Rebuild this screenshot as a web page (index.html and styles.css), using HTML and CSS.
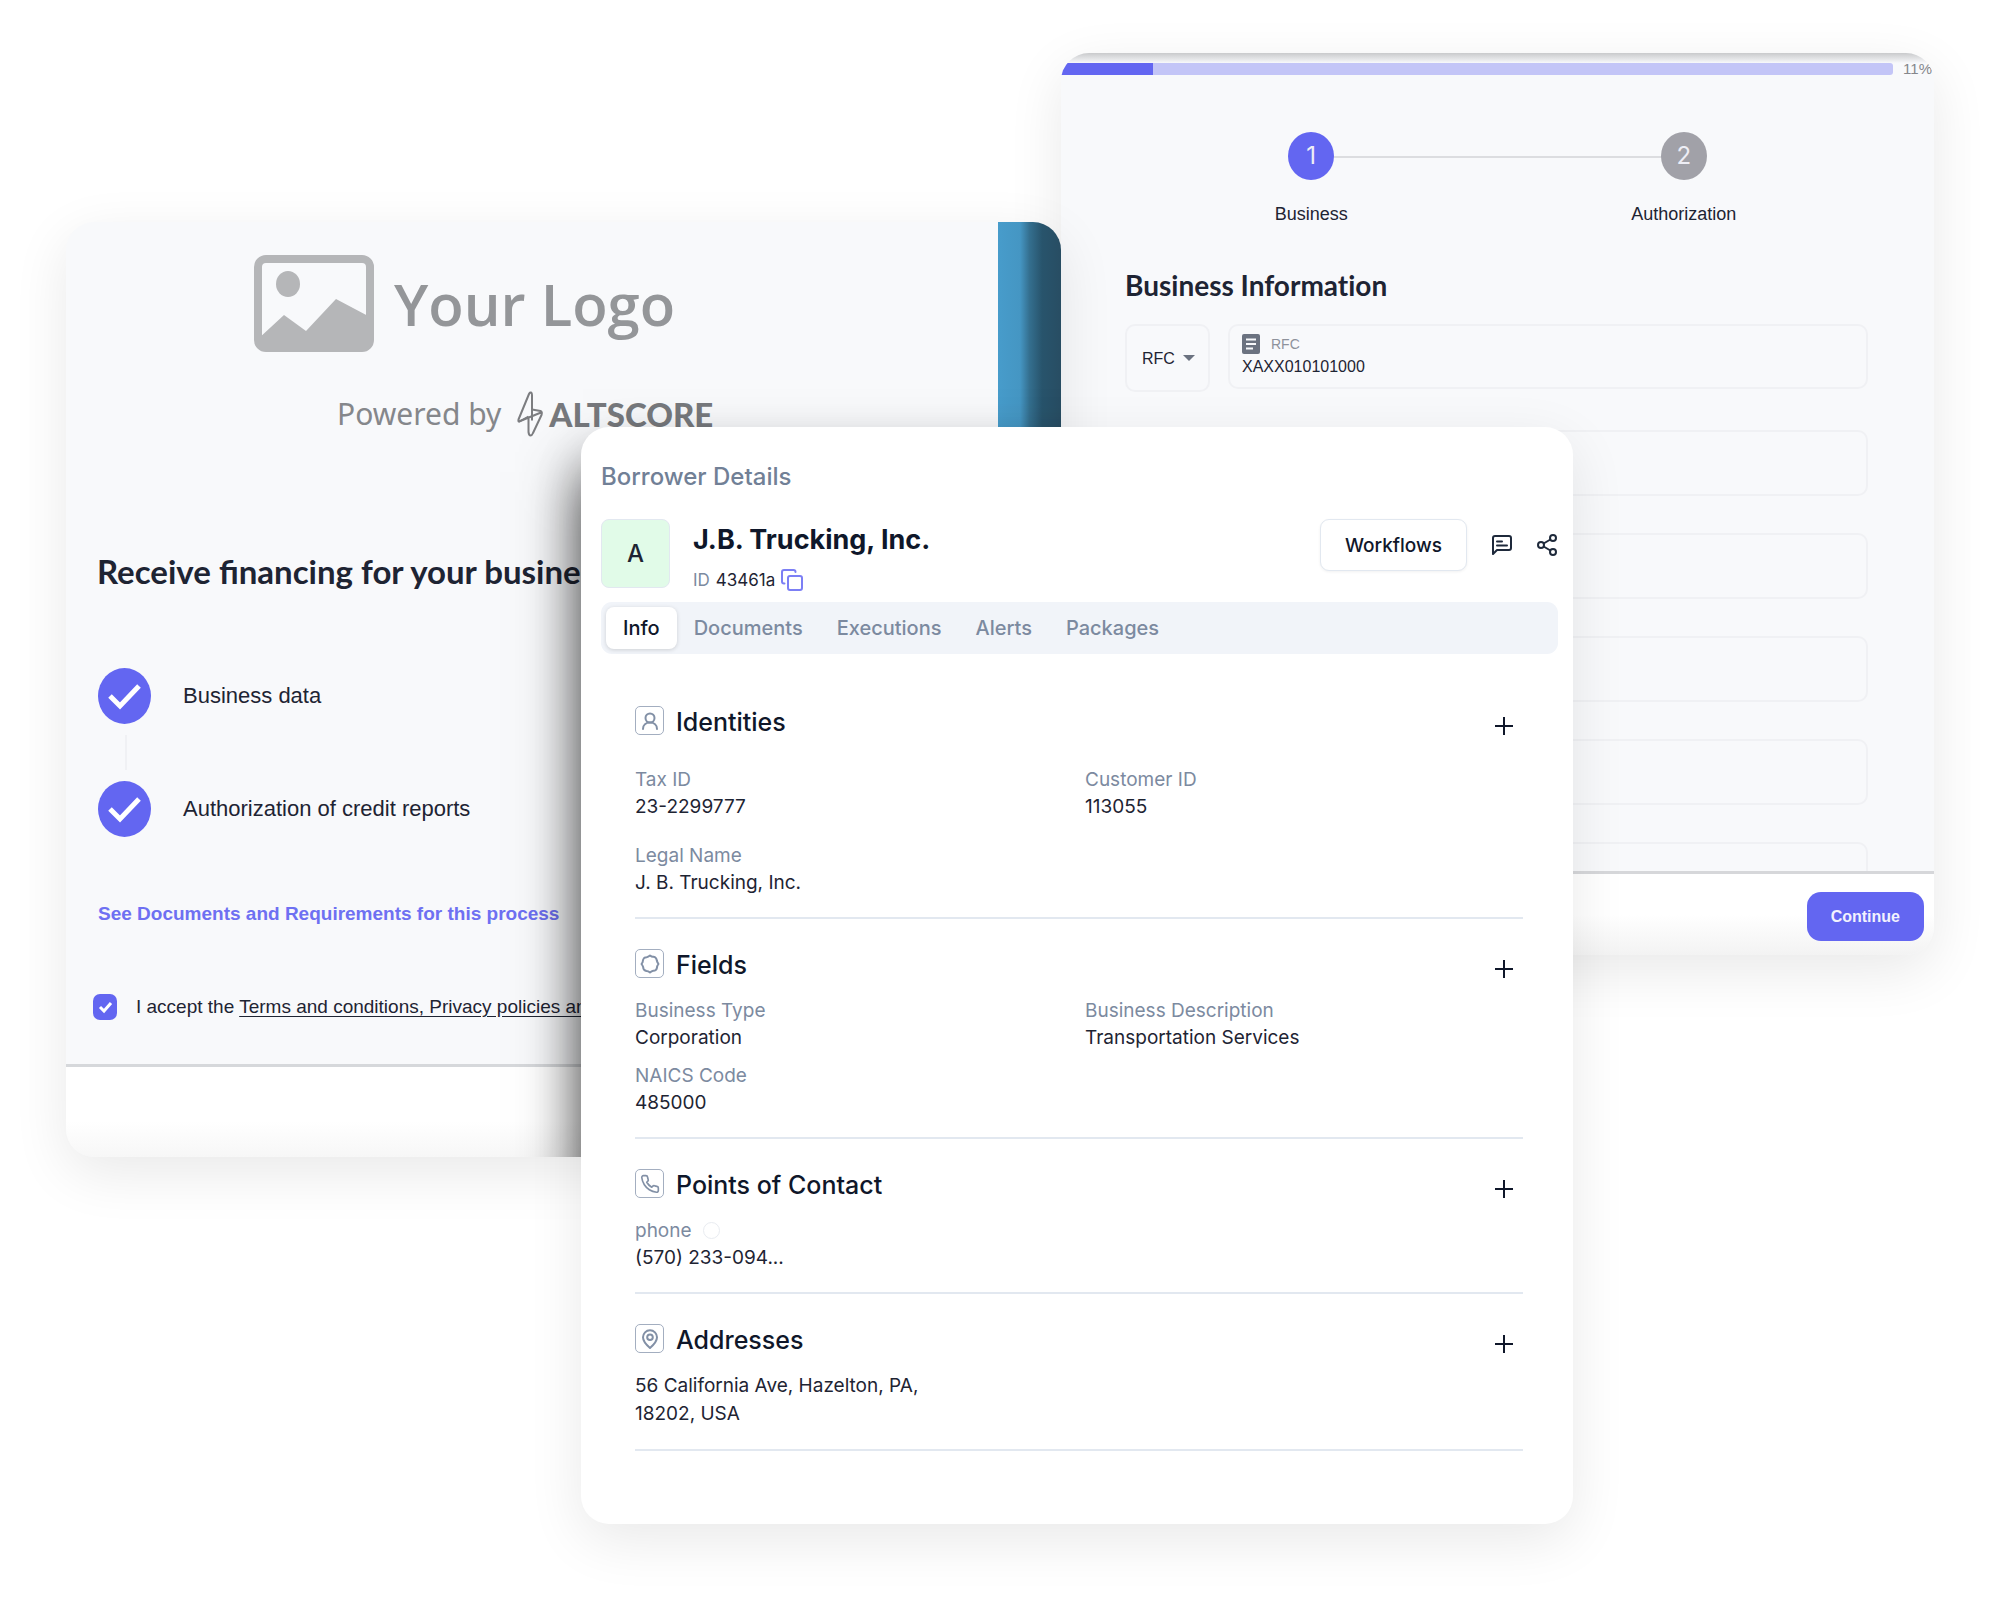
FILE: index.html
```html
<!DOCTYPE html>
<html lang="en">
<head>
    <meta charset="UTF-8" />
    <meta name="viewport" content="width=device-width, initial-scale=1" />
    <title>Borrower Details</title>
    <link rel="stylesheet" href="styles.css">
</head>
<body>
    <main class="stage">

        <!-- Business form -->
        <section class="card business">
            <div class="business-body">
                <div class="progress">
                    <div class="progress-track"><div class="progress-fill" style="width: 11%"></div></div>
                    <span class="progress-value">11%</span>
                </div>
                <ol class="steps">
                    <li class="step active"><span class="step-number">1</span>Business</li>
                    <li class="step"><span class="step-number">2</span>Authorization</li>
                </ol>
                <form class="business-form">
                    <h2>Business Information</h2>
                    <div class="field-row">
                        <div class="select-box">
                            <select aria-label="Identifier type"><option>RFC</option></select>
                            <svg width="12" height="6" viewBox="0 0 12 6"><path d="M0 0h12L6 6z" fill="#6b7280"/></svg>
                        </div>
                        <div class="field">
                            <label for="rfc">
                                <svg width="18" height="20" viewBox="0 0 18 20"><rect width="18" height="20" rx="2" fill="#6b7280"/><path d="M4 5.500h10M4 10h10M4 14.500h7" stroke="#f8f9fc" stroke-width="2"/></svg>
                                RFC
                            </label>
                            <input type="text" id="rfc" value="XAXX010101000" />
                        </div>
                    </div>
                    <input class="blank" type="text" aria-label="Business name" />
                    <input class="blank" type="text" aria-label="Street" />
                    <input class="blank" type="text" aria-label="City" />
                    <input class="blank" type="text" aria-label="State" />
                    <input class="blank" type="text" aria-label="Zip code" />
                </form>
            </div>
            <div class="business-footer">
                <button type="button" class="continue">Continue</button>
            </div>
        </section>

        <!-- Financing request -->
        <section class="card financing">
            <div class="financing-main">
                <div class="financing-body">
                    <div class="logo">
                        <svg width="120" height="97" viewBox="0 0 120 97">
                            <rect x="4" y="4" width="112" height="89" rx="8" fill="none" stroke="#b5b6b8" stroke-width="8"/>
                            <ellipse cx="34" cy="29" rx="12" ry="13" fill="#b5b6b8"/>
                            <path d="M4 84L30 60 52 76 82 44 116 62V93H4z" fill="#b5b6b8"/>
                        </svg>
                        <span>Your Logo</span>
                    </div>
                    <div class="powered">
                        <span>Powered by</span>
                        <svg width="26" height="46" viewBox="0 0 26 46" fill="none" stroke="#7c7d80" stroke-width="2" stroke-linejoin="round">
                            <path d="M11.500 25.500L2.500 30.500Q1 31 1.500 28.500L12 3Q13 1 14 1.500 15 2 15 4V29.500"/>
                            <path d="M2 30.500L24 21.500M11.500 25.500V41Q12 44.500 13.500 44.500 15 44.500 16 42L24.500 24Q25.500 20.500 23.500 20L15 18.500"/>
                        </svg>
                        <strong>ALTSCORE</strong>
                    </div>
                    <h1>Receive financing for your business</h1>
                    <ul class="checks">
                        <li>
                            <svg width="53" height="56" viewBox="0 0 53 56"><ellipse cx="26.500" cy="28" rx="26.500" ry="28" fill="#6366f1"/><path d="M12 28l10 10 19-20" fill="none" stroke="#fff" stroke-width="5"/></svg>
                            Business data
                        </li>
                        <li>
                            <svg width="53" height="56" viewBox="0 0 53 56"><ellipse cx="26.500" cy="28" rx="26.500" ry="28" fill="#6366f1"/><path d="M12 28l10 10 19-20" fill="none" stroke="#fff" stroke-width="5"/></svg>
                            Authorization of credit reports
                        </li>
                    </ul>
                    <a class="requirements" href="#">See Documents and Requirements for this process</a>
                    <div class="accept">
                        <input type="checkbox" id="accept" checked />
                        <label for="accept">I accept the <a href="#">Terms and conditions, Privacy policies and</a></label>
                    </div>
                </div>
                <div class="financing-strip"></div>
            </div>
            <div class="financing-footer"></div>
        </section>

        <!-- Borrower details -->
        <section class="card borrower">
            <p class="borrower-label">Borrower Details</p>
            <header class="borrower-header">
                <div class="avatar">A</div>
                <div class="borrower-name">
                    <h2>J.B. Trucking, Inc.</h2>
                    <p>
                        <span class="muted">ID</span> 43461a
                        <button type="button" class="icon-button" aria-label="Copy ID">
                            <svg width="22" height="22" viewBox="0 0 22 22" fill="none" stroke="#7c7ff5" stroke-width="2" stroke-linejoin="round" stroke-linecap="round"><rect x="7" y="7" width="14" height="14" rx="2"/><path d="M3.500 14.500H3a2 2 0 0 1-2-2V3a2 2 0 0 1 2-2h9.500a2 2 0 0 1 2 2"/></svg>
                        </button>
                    </p>
                </div>
                <div class="actions">
                    <button type="button" class="workflows">Workflows</button>
                    <button type="button" class="icon-button" aria-label="Comments">
                        <svg width="20" height="20" viewBox="0 0 20 20" fill="none" stroke="#1e293b" stroke-width="2" stroke-linejoin="round" stroke-linecap="round"><path d="M1 19V3a2 2 0 0 1 2-2h14a2 2 0 0 1 2 2v10a2 2 0 0 1-2 2H5z"/><path d="M5 6.500h5M5 10.500h10"/></svg>
                    </button>
                    <button type="button" class="icon-button" aria-label="Share">
                        <svg width="20" height="22" viewBox="0 0 20 22" fill="none" stroke="#1e293b" stroke-width="2"><circle cx="4" cy="11" r="3"/><circle cx="16" cy="4" r="3"/><circle cx="16" cy="18" r="3"/><path d="M6.600 9.500l6.800-4M6.600 12.500l6.800 4"/></svg>
                    </button>
                </div>
            </header>

            <nav class="tabs">
                <button type="button" class="tab active">Info</button>
                <button type="button" class="tab">Documents</button>
                <button type="button" class="tab">Executions</button>
                <button type="button" class="tab">Alerts</button>
                <button type="button" class="tab">Packages</button>
            </nav>

            <div class="sections">
                <section class="section roomy">
                    <div class="section-head">
                        <span class="section-icon"><svg width="16" height="18" viewBox="0 0 16 18"><circle cx="8" cy="6" r="4.500"/><path d="M1 17c0-4 3-6.500 7-6.500s7 2.500 7 6.500"/></svg></span>
                        <h3>Identities</h3>
                        <button type="button" class="icon-button add" aria-label="Add identity"><svg width="20" height="20" viewBox="0 0 20 20"><path d="M10 1v18M1 10h18"/></svg></button>
                    </div>
                    <dl class="items">
                        <div><dt>Tax ID</dt><dd>23-2299777</dd></div>
                        <div><dt>Customer ID</dt><dd>113055</dd></div>
                        <div><dt>Legal Name</dt><dd>J. B. Trucking, Inc.</dd></div>
                    </dl>
                </section>

                <section class="section">
                    <div class="section-head">
                        <span class="section-icon"><svg width="20" height="20" viewBox="0 0 20 20"><path d="M10 1.500q2 1.600 3.500 1.300 1.500.3 2.400 1.300.9 1.100.9 2.500.4 1.700 1.700 3.400-1.600 2-1.500 3.500-.2 1.500-1.200 2.400-1 .9-2.500.9-1.700.4-3.300 1.700-2-1.600-3.500-1.500-1.500-.3-2.400-1.200-.9-1-.9-2.500Q2.900 11.800 1.500 10q1.500-1.900 1.400-3.400.2-1.500 1.200-2.500 1-.9 2.500-.9Q8.200 3 10 1.500z"/></svg></span>
                        <h3>Fields</h3>
                        <button type="button" class="icon-button add" aria-label="Add field"><svg width="20" height="20" viewBox="0 0 20 20"><path d="M10 1v18M1 10h18"/></svg></button>
                    </div>
                    <dl class="items">
                        <div><dt>Business Type</dt><dd>Corporation</dd></div>
                        <div><dt>Business Description</dt><dd>Transportation Services</dd></div>
                        <div><dt>NAICS Code</dt><dd>485000</dd></div>
                    </dl>
                </section>

                <section class="section">
                    <div class="section-head">
                        <span class="section-icon"><svg width="20" height="20" viewBox="0 0 24 24"><path d="M22 16.920v3a2 2 0 0 1-2.180 2 19.790 19.790 0 0 1-8.630-3.070 19.500 19.500 0 0 1-6-6 19.790 19.790 0 0 1-3.070-8.670A2 2 0 0 1 4.110 2h3a2 2 0 0 1 2 1.720c.127.96.361 1.903.7 2.810a2 2 0 0 1-.45 2.110L8.090 9.910a16 16 0 0 0 6 6l1.270-1.270a2 2 0 0 1 2.110-.45c.907.339 1.850.573 2.810.7A2 2 0 0 1 22 16.920z"/></svg></span>
                        <h3>Points of Contact</h3>
                        <button type="button" class="icon-button add" aria-label="Add contact"><svg width="20" height="20" viewBox="0 0 20 20"><path d="M10 1v18M1 10h18"/></svg></button>
                    </div>
                    <dl class="items">
                        <div><dt>phone <span class="dot"></span></dt><dd>(570) 233-094...</dd></div>
                    </dl>
                </section>

                <section class="section">
                    <div class="section-head">
                        <span class="section-icon"><svg width="20" height="20" viewBox="0 0 20 20"><path d="M17 8.300C17 13 10 19 10 19S3 13 3 8.300a7 7 0 0 1 14 0z"/><circle cx="10" cy="8.300" r="2.800"/></svg></span>
                        <h3>Addresses</h3>
                        <button type="button" class="icon-button add" aria-label="Add address"><svg width="20" height="20" viewBox="0 0 20 20"><path d="M10 1v18M1 10h18"/></svg></button>
                    </div>
                    <address>56 California Ave, Hazelton, PA,<br>18202, USA</address>
                </section>
            </div>
        </section>

    </main>
</body>
</html>
```

FILE: styles.css
```css
:root {
    --primary: #6366f1;
    --panel: #f8f9fb;
    --line: #f0f1f4;
    --muted: #7c8aa0;
    --text: #1e2433;
    --dark: #0f172a;
}

* {
    box-sizing: border-box;
}

body {
    margin: 0;
    background-color: #fff;
    color: var(--text);
    font-family: Inter, "Liberation Sans", sans-serif;
}

h1, h2, h3, p, ul, ol, dl, dd {
    margin: 0;
    padding: 0;
}

ul, ol {
    list-style: none;
}

svg {
    display: block;
    flex: none;
}

button, input, select {
    font-family: inherit;
    color: inherit;
}

/* The three cards share one grid row and overlap */
.stage {
    display: grid;
    grid-template-columns:
        minmax(0, 66fr) minmax(0, 515fr) minmax(0, 480fr)
        minmax(0, 512fr) minmax(0, 361fr) minmax(0, 66fr);
    align-items: start;
    min-height: 100vh;
    padding-bottom: 80px;
}

.card {
    grid-row: 1;
    border-radius: 28px;
    box-shadow: 0 16px 56px rgba(0, 0, 0, 0.09);
    overflow: hidden;
}

/* Business form */
.business {
    grid-column: 4 / 6;
    margin-top: 53px;
    background-color: var(--panel);
    font-family: "Liberation Sans", Arial, sans-serif;
}

.business-body {
    height: 821px;
    overflow: hidden;
    border-bottom: 3px solid #d6d7da;
    background-image: linear-gradient(#c9cacc, #f3f4f6 9px, var(--panel) 10px);
}

.progress {
    display: flex;
    align-items: center;
    gap: 10px;
    height: 13px;
    margin-top: 9px;
}

.progress-track {
    flex: 1;
    height: 12px;
    background-color: #c3c5f7;
    border-radius: 0 3px 3px 0;
}

.progress-fill {
    height: 100%;
    background-color: var(--primary);
}

.progress-value {
    font-size: 15px;
    color: #85878c;
    padding-right: 2px;
}

.steps {
    display: flex;
    padding: 57px 64px 0;
}

.step {
    position: relative;
    flex: 1;
    display: flex;
    flex-direction: column;
    align-items: center;
    gap: 22px;
    font-size: 18px;
    line-height: 24px;
}

.step-number {
    z-index: 1;
    width: 46px;
    height: 48px;
    border-radius: 50%;
    background-color: #a1a1a8;
    color: #eeeef5;
    font-family: Inter, sans-serif;
    font-size: 24px;
    line-height: 48px;
    text-align: center;
}

.step.active .step-number {
    background-color: var(--primary);
}

.step.active::after {
    content: "";
    position: absolute;
    top: 24px;
    left: 50%;
    width: 100%;
    height: 2px;
    background-color: #dcdde0;
}

.business-form {
    display: flex;
    flex-direction: column;
    padding: 41px 66px 0 64px;
}

.business-form h2 {
    font-family: Lato, sans-serif;
    font-size: 28px;
    font-variant-ligatures: none;
    line-height: 36px;
}

.field-row {
    display: flex;
    align-items: flex-start;
    gap: 18px;
    margin: 21px 0 38px;
}

.select-box {
    display: flex;
    align-items: center;
    gap: 8px;
    height: 68px;
    padding: 0 13px 0 15px;
    border: 2px solid var(--line);
    border-radius: 10px;
}

.select-box select {
    appearance: none;
    border: 0;
    padding: 0;
    background: none;
    font-size: 16px;
}

.field {
    flex: 1;
    height: 65px;
    padding: 7px 12px;
    border: 2px solid var(--line);
    border-radius: 10px;
}

.field label {
    display: flex;
    align-items: center;
    gap: 11px;
    font-size: 14px;
    line-height: 22px;
    color: #8e929c;
}

.field input {
    display: block;
    width: 100%;
    height: 24px;
    border: 0;
    padding: 0;
    background: none;
    font-size: 16px;
}

.blank {
    width: 100%;
    height: 66px;
    flex: none;
    margin-bottom: 37px;
    padding: 0 12px;
    border: 2px solid var(--line);
    border-radius: 10px;
    background: none;
}

.business-footer {
    display: flex;
    justify-content: flex-end;
    padding: 18px 10px 14px;
    background-image: linear-gradient(#fff 50%, #f3f3f3);
}

.continue {
    height: 49px;
    padding: 0 24px;
    border: 0;
    border-radius: 14px;
    background-color: var(--primary);
    color: #f2f2fe;
    font-size: 16px;
    font-weight: bold;
}

/* Financing request */
.financing {
    position: relative;
    grid-column: 2 / 4;
    margin-top: 222px;
    background-color: var(--panel);
    font-family: "Liberation Sans", Arial, sans-serif;
}

/* dark shadow behind the borrower card */
.financing::after {
    content: "";
    position: absolute;
    top: 250px;
    bottom: -80px;
    left: 52%;
    width: 60%;
    box-shadow: 0 0 56px rgba(0, 0, 0, 0.8);
}

.financing-main {
    display: flex;
    border-bottom: 3px solid #d6d8db;
}

.financing-body {
    flex: 1;
    min-width: 0;
    padding: 33px 27px 44px;
    white-space: nowrap;
}

.financing-strip {
    width: 63px;
    background-image: linear-gradient(to right, #479ccb, #4596c3 35%, #346f8f 50%, #28546c 70%, #284d63);
}

.logo {
    display: flex;
    align-items: center;
    gap: 20px;
    padding-left: 161px;
    color: #949699;
    font-family: "Open Sans", sans-serif;
    font-size: 58px;
    font-weight: 600;
    line-height: 97px;
}

.powered {
    display: flex;
    align-items: center;
    padding: 39px 0 0 244px;
    color: #85878b;
    font-family: "Noto Sans", sans-serif;
    font-size: 30px;
    line-height: 46px;
}

.powered svg {
    margin: 0 6px 0 16px;
}

.powered strong {
    font-family: Lato, sans-serif;
    font-size: 33px;
    font-weight: 900;
    color: #77797d;
}

.financing h1 {
    margin-top: 112px;
    padding-left: 4px;
    font-family: Lato, sans-serif;
    font-size: 33px;
    line-height: 44px;
}

.checks {
    display: flex;
    flex-direction: column;
    gap: 57px;
    margin: 75px 0 65px;
    padding-left: 5px;
}

.checks li {
    position: relative;
    display: flex;
    align-items: center;
    gap: 32px;
    font-size: 22px;
}

.checks li + li::before {
    content: "";
    position: absolute;
    top: -46px;
    left: 27px;
    width: 2px;
    height: 35px;
    background-color: #f0f1f4;
}

.requirements {
    display: block;
    padding-left: 5px;
    color: #6e70f2;
    font-size: 19px;
    font-weight: bold;
    line-height: 24px;
    text-decoration: none;
}

.accept {
    display: flex;
    align-items: center;
    gap: 19px;
    margin-top: 68px;
    font-size: 19px;
    line-height: 26px;
}

.accept input {
    appearance: none;
    flex: none;
    width: 24px;
    height: 26px;
    margin: 0;
    border-radius: 7px;
    background: var(--primary) url("data:image/svg+xml,%3Csvg xmlns='http://www.w3.org/2000/svg' viewBox='0 0 24 26'%3E%3Cpath d='M7 13l4 4 7-8' fill='none' stroke='white' stroke-width='3'/%3E%3C/svg%3E") center no-repeat;
}

.accept a {
    color: inherit;
    text-underline-offset: 3px;
}

.financing-footer {
    height: 90px;
    background-image: linear-gradient(#fff 60%, #f7f7f7);
}

/* Borrower details */
.borrower {
    z-index: 2;
    grid-column: 3 / 5;
    margin-top: 427px;
    padding: 33px 15px 73px 20px;
    background-color: #fff;
}

.borrower-label {
    color: #718096;
    font-size: 24px;
    font-weight: 500;
    line-height: 34px;
}

.borrower-header {
    display: flex;
    align-items: flex-start;
    margin: 25px 0 9px;
}

.avatar {
    width: 69px;
    height: 69px;
    border: 1px solid #e2e8f0;
    border-radius: 8px;
    background-color: #e1fbe8;
    font-size: 24px;
    font-weight: 500;
    line-height: 67px;
    text-align: center;
}

.borrower-name {
    margin-left: 23px;
}

.borrower-name h2 {
    color: var(--dark);
    font-size: 27px;
    font-weight: 700;
    line-height: 42px;
}

.borrower-name p {
    display: flex;
    align-items: center;
    gap: 6px;
    margin-top: 6px;
    font-size: 17px;
    line-height: 26px;
}

.muted {
    color: var(--muted);
}

.icon-button {
    border: 0;
    padding: 0;
    background: none;
}

.actions {
    display: flex;
    align-items: center;
    gap: 25px;
    margin-left: auto;
    padding-right: 1px;
}

.workflows {
    height: 52px;
    padding: 0 24px;
    border: 1px solid #e2e8f0;
    border-radius: 9px;
    background-color: #fff;
    box-shadow: 0 1px 3px rgba(0, 0, 0, 0.06);
    color: var(--dark);
    font-size: 19px;
    font-weight: 500;
}

.tabs {
    display: flex;
    padding: 5px;
    border-radius: 11px;
    background-color: #f1f4f9;
}

.tab {
    height: 42px;
    padding: 0 17px;
    border: 0;
    border-radius: 8px;
    background: none;
    color: var(--muted);
    font-size: 20px;
    font-weight: 500;
}

.tab.active {
    background-color: #fff;
    box-shadow: 0 1px 4px rgba(0, 0, 0, 0.15);
    color: var(--dark);
}

.sections {
    padding: 22px 35px 0 34px;
}

.section {
    padding: 30px 0 21px;
    border-bottom: 2px solid #e2e8f0;
}

.section-head {
    display: flex;
    align-items: flex-start;
    gap: 12px;
    margin-bottom: 16px;
}

.roomy .section-head {
    margin-bottom: 28px;
}

.section-icon {
    display: flex;
    align-items: center;
    justify-content: center;
    width: 29px;
    height: 29px;
    border: 1px solid #a3aec0;
    border-radius: 5px;
}

.section-icon svg {
    fill: none;
    stroke: #8290a6;
    stroke-width: 2;
    stroke-linejoin: round;
    stroke-linecap: round;
}

.section h3 {
    color: var(--dark);
    font-size: 25px;
    font-weight: 500;
    line-height: 32px;
}

.add {
    margin: 10px 9px 0 auto;
}

.add svg {
    fill: none;
    stroke: var(--dark);
    stroke-width: 2;
}

.items {
    display: grid;
    grid-template-columns: 1fr 1fr;
    gap: 11px 12px;
}

.roomy .items {
    row-gap: 22px;
}

.items dt {
    display: flex;
    align-items: center;
    gap: 11px;
    color: var(--muted);
}

.items,
address {
    font-size: 19px;
    font-style: normal;
    line-height: 27px;
}

address {
    line-height: 28px;
}

.dot {
    width: 17px;
    height: 17px;
    border: 1px solid #e9ecf1;
    border-radius: 50%;
}
```
